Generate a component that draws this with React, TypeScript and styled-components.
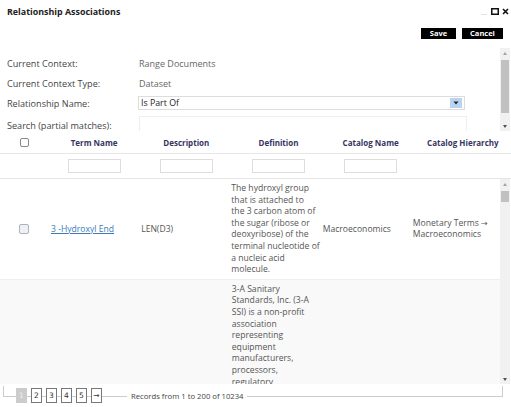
import styled, { createGlobalStyle } from 'styled-components';

const GlobalStyle = createGlobalStyle`
  html, body {
    margin: 0;
    padding: 0;
    background: #fff;
  }
  body {
    font-family: "Open Sans", "Liberation Sans", sans-serif;
    color: #444;
    font-size: 8px;
  }
  * { box-sizing: border-box; }
`;

const Dialog = styled.div`
  width: 511px;
  height: 407px;
  display: flex;
  flex-direction: column;
  background: #fff;
  overflow: hidden;
`;

const TitleBar = styled.div`
  flex-shrink: 0;
  height: 22px;
  display: flex;
  align-items: center;
  justify-content: space-between;
  padding: 0 2px 0 7px;
`;

const Title = styled.h1`
  margin: 0;
  font-size: 8.9px;
  font-weight: 700;
  color: #222;
`;

const WindowControls = styled.div`
  display: flex;
  align-items: center;
  gap: 3px;
`;

const Minimize = styled.span`
  width: 6px;
  height: 1px;
  background: #e2e2e2;
  margin-top: 7px;
  margin-right: 1px;
`;

const Toolbar = styled.div`
  flex-shrink: 0;
  display: flex;
  justify-content: flex-end;
  gap: 6px;
  padding: 6px 8px 0 0;
  height: 26px;
`;

const ActionButton = styled.button<{ $w: number }>`
  height: 11px;
  padding: 0;
  width: ${(p) => p.$w}px;
  border: none;
  background: #000;
  color: #fff;
  font-family: inherit;
  font-weight: 700;
  font-size: 7.5px;
  line-height: 11px;
`;

/* hand-drawn scrollbars, the page's own look */
const ScrollFrame = styled.div<{ $h?: number }>`
  display: flex;
  min-height: 0;
  ${(p) => (p.$h ? `height: ${p.$h}px; flex-shrink: 0;` : 'flex: 1;')}
`;

const ScrollContent = styled.div`
  flex: 1;
  min-width: 0;
  overflow: hidden;
`;

const ScrollBar = styled.div`
  width: 10px;
  margin-right: 1px;
  display: flex;
  flex-direction: column;
  background: #f1f1f1;
`;

const ScrollButton = styled.div<{ $down?: boolean }>`
  height: 10px;
  display: flex;
  align-items: center;
  justify-content: center;

  &::after {
    content: '';
    width: 0;
    height: 0;
    border-left: 2.5px solid transparent;
    border-right: 2.5px solid transparent;
    ${(p) =>
      p.$down
        ? 'border-top: 3px solid #505050;'
        : 'border-bottom: 3px solid #a3a3a3;'}
  }
`;

const ScrollTrack = styled.div`
  flex: 1;
  padding: 2px 1px;
`;

const Thumb = styled.div<{ $h: number }>`
  height: ${(p) => p.$h}px;
  background: #c1c1c1;
`;

const FormGrid = styled.div`
  display: grid;
  grid-template-columns: 132px 328px;
  grid-template-rows: 20px 20px 20px 24px;
  align-items: center;
  padding: 5px 0 0 7px;
`;

const Label = styled.div`
  color: #444;
  font-size: 9.1px;
`;

const Value = styled.div`
  color: #666;
  font-size: 9px;
`;

const Select = styled.div`
  height: 14px;
  border: 1px solid #ddd;
  display: flex;
  align-items: center;
  justify-content: space-between;
  padding: 0 2px;
  color: #222;
  font-size: 8.8px;
  width: 327px;
  margin-left: -1px;
`;

const SelectArrow = styled.span`
  width: 12px;
  height: 10px;
  background: #b9d4f1;
  display: flex;
  align-items: center;
  justify-content: center;
`;

const SearchInput = styled.div`
  align-self: start;
  height: 16px;
  border: 1px solid #eee;
  width: 328px;
  margin-top: 3px;
`;

const Grid = styled.div`
  display: grid;
  grid-template-columns: 48px repeat(5, 1fr);
`;

const HeaderRow = styled(Grid)`
  flex-shrink: 0;
  height: 23px;
  align-items: center;
  border-bottom: 1px solid #e6e6e6;
  padding: 0 2px 0 0;
`;

const HeaderCell = styled.div`
  text-align: center;
  font-weight: 700;
  font-size: 8px;
  color: #35355f;
  white-space: nowrap;
`;

const FilterRow = styled(Grid)`
  flex-shrink: 0;
  height: 25px;
  align-items: center;
  border-bottom: 1px solid #e6e6e6;
  padding: 0 2px 0 0;
`;

const FilterInput = styled.div`
  width: 53px;
  height: 14px;
  border: 1px solid #ddd;
  justify-self: center;
`;

const CheckCell = styled.div`
  display: flex;
  justify-content: center;
`;

const Checkbox = styled.span<{ $filled?: boolean }>`
  width: ${(p) => (p.$filled ? 10 : 9)}px;
  height: ${(p) => (p.$filled ? 10 : 9)}px;
  border: 1px solid ${(p) => (p.$filled ? '#a9b4c0' : '#888')};
  border-radius: 2px;
  background: ${(p) => (p.$filled ? '#eef0f3' : '#fff')};
`;

const BodyRow = styled(Grid)<{ $alt?: boolean }>`
  align-items: center;
  background: ${(p) => (p.$alt ? '#f9f9f9' : '#fff')};
  border-bottom: 1px solid #eee;
  padding: 4px 0 3px;
`;

const Cell = styled.div`
  padding: 0 0 0 3px;
  font-size: 8.6px;
  line-height: 11.6px;
  color: #555;
  white-space: pre;
`;

const TermLink = styled.a`
  color: #3d7ab8;
  text-decoration: underline;
`;

const Arrow = styled.span`
  font-family: "DejaVu Sans", sans-serif;
  font-size: 8px;
`;

const Footer = styled.div`
  flex-shrink: 0;
  height: 23px;
  position: relative;
  display: flex;
  align-items: center;
  padding: 0 0 0 16px;
  background: #fff;

  &::before {
    content: '';
    position: absolute;
    left: 3px;
    right: 8px;
    top: 2px;
    height: 10px;
    border: 1px solid #ccc;
    border-top: none;
  }
`;

const Pager = styled.div`
  display: flex;
  gap: 4px;
  position: relative;
`;

const PageButton = styled.span<{ $active?: boolean }>`
  width: 11px;
  height: 15px;
  display: flex;
  align-items: center;
  justify-content: center;
  font-size: 7.5px;
  font-family: "DejaVu Sans", sans-serif;
  border: 1px solid ${(p) => (p.$active ? '#ccc' : '#777')};
  background: ${(p) => (p.$active ? '#ccc' : '#fff')};
  color: ${(p) => (p.$active ? '#eee' : '#333')};
`;

const RecordInfo = styled.span`
  position: relative;
  margin-left: 25px;
  padding: 0 4px;
  background: #fff;
  font-size: 7.7px;
  color: #444;
`;

type Row = {
  term: string;
  desc: string;
  def: string;
  catalog: string;
  hierarchy: string;
};

const rows: Row[] = [
  {
    term: '3 -Hydroxyl End',
    desc: 'LEN(D3)',
    def: 'The hydroxyl group\nthat is attached to\nthe 3 carbon atom of\nthe sugar (ribose or\ndeoxyribose) of the\nterminal nucleotide of\na nucleic acid\nmolecule.',
    catalog: 'Macroeconomics',
    hierarchy: 'Monetary Terms',
  },
  {
    term: '3-A SSI',
    desc: 'LEN(D3)',
    def: '3-A Sanitary\nStandards, Inc. (3-A\nSSI) is a non-profit\nassociation\nrepresenting\nequipment\nmanufacturers,\nprocessors,\nregulatory\nsanitarians,\neducators and\npublic health\nprofessionals\ndedicated to\nadvancing food\nsafety through\nhygienic design\nstandards and\naccepted practices\nfor dairy, food,\nbeverage and\npharmaceutical\nprocessing\nequipment and\nsystems used\nthroughout the\nindustry.',
    catalog: 'Macroeconomics',
    hierarchy: 'Monetary Terms',
  },
];

const CloseIcon = () => (
  <svg width="7" height="7" viewBox="0 0 7 7">
    <path d="M1 1 L6 6 M6 1 L1 6" stroke="#111" strokeWidth="1.6" />
  </svg>
);

const MaxIcon = () => (
  <svg width="8" height="7" viewBox="0 0 8 7">
    <rect x="0.75" y="0.75" width="6.5" height="5.5" fill="none" stroke="#111" strokeWidth="1.5" />
  </svg>
);

const CaretDown = () => (
  <svg width="6" height="4" viewBox="0 0 6 4">
    <path d="M0.5 0.5 L5.5 0.5 L3 3.5 Z" fill="#222" />
  </svg>
);

export default function App() {
  return (
    <>
      <GlobalStyle />
      <Dialog>
        <TitleBar>
          <Title>Relationship Associations</Title>
          <WindowControls>
            <Minimize />
            <MaxIcon />
            <CloseIcon />
          </WindowControls>
        </TitleBar>
        <Toolbar>
          <ActionButton $w={35}>Save</ActionButton>
          <ActionButton $w={41}>Cancel</ActionButton>
        </Toolbar>
        <ScrollFrame $h={83}>
          <ScrollContent>
            <FormGrid>
              <Label>Current Context:</Label>
              <Value>Range Documents</Value>
              <Label>Current Context Type:</Label>
              <Value>Dataset</Value>
              <Label>Relationship Name:</Label>
              <Select>
                <span>Is Part Of</span>
                <SelectArrow>
                  <CaretDown />
                </SelectArrow>
              </Select>
              <Label>Search (partial matches):</Label>
              <SearchInput />
            </FormGrid>
          </ScrollContent>
          <ScrollBar>
            <ScrollButton />
            <ScrollTrack>
              <Thumb $h={53} />
            </ScrollTrack>
            <ScrollButton $down />
          </ScrollBar>
        </ScrollFrame>
        <HeaderRow>
          <CheckCell>
            <Checkbox />
          </CheckCell>
          <HeaderCell>Term Name</HeaderCell>
          <HeaderCell>Description</HeaderCell>
          <HeaderCell>Definition</HeaderCell>
          <HeaderCell>Catalog Name</HeaderCell>
          <HeaderCell>Catalog Hierarchy</HeaderCell>
        </HeaderRow>
        <FilterRow>
          <div />
          <FilterInput />
          <FilterInput />
          <FilterInput />
          <FilterInput />
          <div />
        </FilterRow>
        <ScrollFrame>
          <ScrollContent>
            {rows.map((r, i) => (
              <BodyRow key={r.term} $alt={i % 2 === 1}>
                <CheckCell>
                  <Checkbox $filled />
                </CheckCell>
                <Cell>
                  <TermLink href="#">{r.term}</TermLink>
                </Cell>
                <Cell>{r.desc}</Cell>
                <Cell>{r.def}</Cell>
                <Cell>{r.catalog}</Cell>
                <Cell>
                  {r.hierarchy} <Arrow>→</Arrow>
                  {'\n'}
                  {r.catalog}
                </Cell>
              </BodyRow>
            ))}
          </ScrollContent>
          <ScrollBar>
            <ScrollButton />
            <ScrollTrack>
              <Thumb $h={11} />
            </ScrollTrack>
            <ScrollButton $down />
          </ScrollBar>
        </ScrollFrame>
        <Footer>
          <Pager>
            <PageButton $active>1</PageButton>
            <PageButton>2</PageButton>
            <PageButton>3</PageButton>
            <PageButton>4</PageButton>
            <PageButton>5</PageButton>
            <PageButton>→</PageButton>
          </Pager>
          <RecordInfo>Records from 1 to 200 of 10234</RecordInfo>
        </Footer>
      </Dialog>
    </>
  );
}
